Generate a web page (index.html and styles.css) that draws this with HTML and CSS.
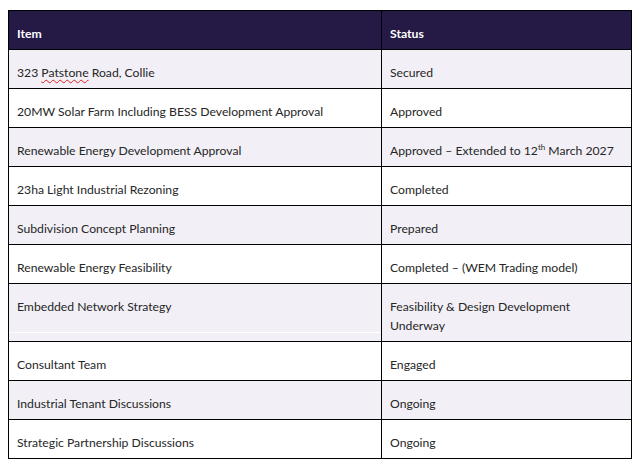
FILE: index.html
```html
<!DOCTYPE html>
<html lang="en">
<head>
<meta charset="utf-8">
<title>Project Status</title>
<link rel="stylesheet" href="styles.css">
</head>
<body>
<div class="page">
  <table class="status-table">
    <colgroup>
      <col class="col-item">
      <col class="col-status">
    </colgroup>
    <thead>
      <tr>
        <th>Item</th>
        <th>Status</th>
      </tr>
    </thead>
    <tbody>
      <tr class="shaded">
        <td>323 <span class="spell">Patstone</span> Road, Collie</td>
        <td>Secured</td>
      </tr>
      <tr>
        <td>20MW Solar Farm Including BESS Development Approval</td>
        <td>Approved</td>
      </tr>
      <tr class="shaded">
        <td>Renewable Energy Development Approval</td>
        <td class="nowrap">Approved – Extended to 12<sup>th</sup> March 2027</td>
      </tr>
      <tr>
        <td>23ha Light Industrial Rezoning</td>
        <td>Completed</td>
      </tr>
      <tr class="shaded">
        <td>Subdivision Concept Planning</td>
        <td>Prepared</td>
      </tr>
      <tr>
        <td>Renewable Energy Feasibility</td>
        <td>Completed – (WEM Trading model)</td>
      </tr>
      <tr class="shaded">
        <td class="gap-line">Embedded Network Strategy</td>
        <td>Feasibility &amp; Design Development<br>Underway</td>
      </tr>
      <tr>
        <td>Consultant Team</td>
        <td>Engaged</td>
      </tr>
      <tr class="shaded">
        <td>Industrial Tenant Discussions</td>
        <td>Ongoing</td>
      </tr>
      <tr>
        <td>Strategic Partnership Discussions</td>
        <td>Ongoing</td>
      </tr>
    </tbody>
  </table>
</div>
</body>
</html>
```

FILE: styles.css
```css
html, body {
  margin: 0;
  padding: 0;
  background: #ffffff;
}

.page {
  padding: 10px 0 0 8px;
}

.status-table {
  border-collapse: collapse;
  width: 624px;
  table-layout: fixed;
  font-family: Lato, "Open Sans", sans-serif;
  font-size: 12.2px;
  line-height: 19px;
  color: #262626;
}

.col-item {
  width: 373px;
}

.status-table th,
.status-table td {
  border: 1px solid #000000;
  padding: 13px 8px 6px 8px;
  text-align: left;
  vertical-align: top;
}

.status-table th {
  background: #241a45;
  color: #ffffff;
  font-weight: 700;
}

.status-table tr.shaded td {
  background: #f2f0f6;
}

.status-table td.gap-line {
  box-shadow: inset 0 -8px 0 #f2f0f6, inset 0 -9px 0 #ffffff;
}

.status-table td.nowrap {
  white-space: nowrap;
}

.spell {
  text-decoration: underline wavy #e0201e;
  text-decoration-thickness: 1px;
  text-underline-offset: 2px;
}

sup {
  font-size: 8px;
  line-height: 0;
  vertical-align: 5px;
}
```
